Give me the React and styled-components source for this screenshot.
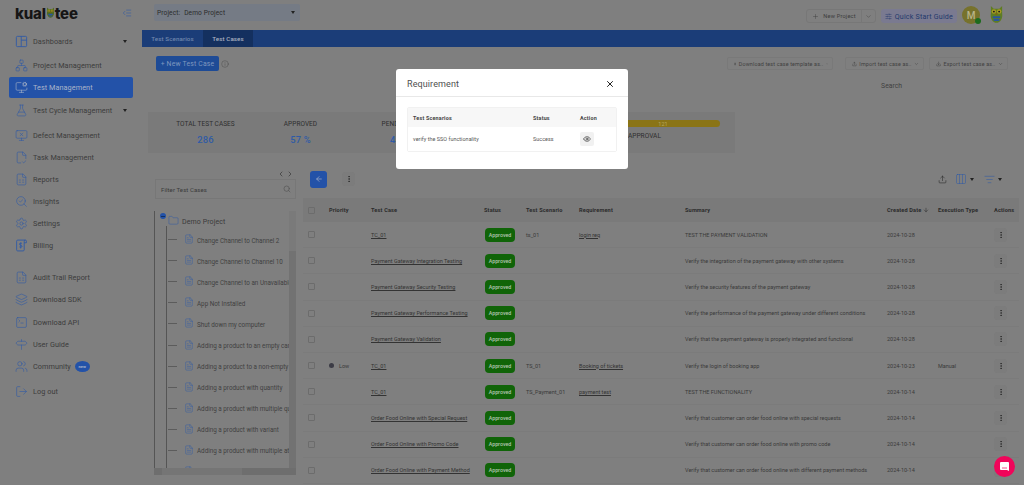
import React from 'react';
import styled, { createGlobalStyle } from 'styled-components';
import {
  Network, MonitorCog, FlaskConical, MonitorX, FileCheck2, FileSpreadsheet, SearchCheck,
  Settings, Layers, SquareTerminal, Signpost, Users, LogOut, ChevronDown, ChevronLeft,
  ChevronRight, Plus, Info, FileText, Upload, Download, Search, ArrowLeft, ArrowDown, EllipsisVertical,
  Columns3, ListFilter, Eye, X, Folder, SlidersHorizontal, IndentDecrease,
} from 'lucide-react';

const Global = createGlobalStyle`
  html, body { margin: 0; padding: 0; height: 100%; background: #7f7f7f; overflow: hidden; }
  * { box-sizing: border-box; }
  body { font-family: Roboto, "Liberation Sans", sans-serif; color: #333; }
`;

const Page = styled.div`
  display: flex;
  width: 1024px;
  height: 485px;
  overflow: hidden;
  background: #7f7f7f;
`;

/* ---- sidebar ---- */
const Sidebar = styled.aside`
  width: 142px;
  flex: none;
  display: flex;
  flex-direction: column;
  padding: 0 9px;
`;
const LogoRow = styled.div`
  height: 30px;
  display: flex;
  align-items: center;
  justify-content: space-between;
  padding: 0 1px 4px 6px;
  color: #2f5aa6;
`;
const Logo = styled.div`
  display: flex;
  align-items: center;
  font-family: Inter, "DejaVu Sans", sans-serif;
  font-weight: 800;
  font-size: 15px;
  letter-spacing: -0.2px;
  color: #161616;
`;
const NavItem = styled.div`
  height: ${p => (p.$active ? 21 : 22)}px;
  margin-top: ${p => p.$mt || 0}px;
  display: flex;
  align-items: center;
  gap: 5px;
  padding: 0 6px;
  border-radius: 2px;
  font-size: 7.3px;
  letter-spacing: 0.05px;
  white-space: nowrap;
  color: ${p => (p.$active ? '#aab4c8' : '#3c3c3c')};
  background: ${p => (p.$active ? '#2352a8' : 'transparent')};
  svg { flex: none; color: ${p => (p.$active ? '#aab4c8' : '#2f5aa6')}; }
`;
const Caret = styled.span`
  width: 0;
  height: 0;
  border-left: 2.5px solid transparent;
  border-right: 2.5px solid transparent;
  border-top: 3px solid ${p => p.$color || '#222'};
  margin-left: ${p => p.$ml || '0'};
`;
const NewPill = styled.span`
  width: 15px;
  height: 11px;
  margin-left: -1px;
  border-radius: 50%;
  background: #2352a8;
  color: #aab4c8;
  font-size: 4px;
  font-weight: 700;
  display: flex;
  align-items: center;
  justify-content: center;
`;

/* ---- top of main ---- */
const Main = styled.main`
  flex: 1;
  min-width: 0;
  display: flex;
  flex-direction: column;
`;
const Header = styled.header`
  height: 30px;
  display: flex;
  align-items: flex-start;
  justify-content: space-between;
  padding: 4px 20px 0 12px;
`;
const ProjectSelect = styled.div`
  width: 146px;
  height: 17px;
  display: flex;
  align-items: center;
  padding: 0 5px 0 3px;
  background: #757b85;
  border-radius: 2px;
  font-size: 6.6px;
  letter-spacing: 0.1px;
  color: #2b2b2b;
  b { font-weight: 400; margin-left: 4px; flex: 1; }
`;
const HeaderRight = styled.div`
  display: flex;
  align-items: center;
  gap: 5px;
`;
const SplitButton = styled.div`
  display: flex;
  height: 14px;
  margin-top: 4px;
  border: 1px solid #777;
  border-radius: 3px;
  font-size: 5.6px;
  letter-spacing: 0.2px;
  color: #3c3c3c;
  span {
    display: flex;
    align-items: center;
    gap: 4px;
    padding: 0 5px;
  }
  span + span { border-left: 1px solid #777; padding: 0 3px; }
`;
const GuideButton = styled.div`
  height: 14px;
  margin-top: 4px;
  padding: 0 4px;
  display: flex;
  align-items: center;
  gap: 3px;
  background: #7a7a90;
  border-radius: 3px;
  color: #22396c;
  font-size: 7.1px;
  letter-spacing: 0.2px;
`;
const Avatar = styled.div`
  position: relative;
  width: 18px;
  height: 18px;
  margin-top: 2px;
  border-radius: 50%;
  background: #77722c;
  color: #b9b48a;
  font-size: 10px;
  font-weight: 500;
  display: flex;
  align-items: center;
  justify-content: center;
  &::after {
    content: '';
    position: absolute;
    right: -1px;
    bottom: 0;
    width: 6px;
    height: 6px;
    border-radius: 50%;
    background: #1d6b1d;
  }
`;
const OwlSlot = styled.div`
  margin: 1px 0 0 4px;
  display: flex;
`;
const TabBar = styled.nav`
  height: 17px;
  flex: none;
  display: flex;
  background: #1b3d78;
`;
const Tab = styled.div`
  width: ${p => p.$w}px;
  height: 100%;
  display: flex;
  align-items: center;
  justify-content: center;
  background: ${p => (p.$active ? '#14305f' : 'transparent')};
  color: ${p => (p.$active ? '#a9b1c0' : '#6f86ad')};
  font-size: 6.2px;
  font-weight: 500;
  letter-spacing: 0.1px;
`;
const ActionArea = styled.section`
  height: 65px;
  flex: none;
  display: flex;
  justify-content: space-between;
  padding: 9px 16px 0 14px;
`;
const ActionLeft = styled.div`
  display: flex;
  align-items: flex-start;
  gap: 2px;
  color: #404040;
  svg { margin-top: 4px; }
`;
const PrimaryButton = styled.div`
  width: 63px;
  height: 15px;
  border-radius: 2px;
  background: #1e4b96;
  color: #7f97bf;
  display: flex;
  align-items: center;
  justify-content: center;
  font-size: 6.8px;
  letter-spacing: 0.2px;
`;
const ActionRight = styled.div`
  display: flex;
  flex-direction: column;
  align-items: flex-end;
`;
const ExportRow = styled.div`
  display: flex;
  gap: 5px;
`;
const GhostSelect = styled.div`
  width: ${p => p.$w}px;
  height: 13px;
  margin-top: 1px;
  margin-left: ${p => p.$ml || 0}px;
  padding: 0 4px 0 6px;
  display: flex;
  align-items: center;
  gap: 2.5px;
  border: 1px solid #797979;
  border-radius: 2px;
  font-size: 5.4px;
  letter-spacing: 0.15px;
  color: #3f3f3f;
  white-space: nowrap;
  span { flex: 1; }
`;
const SearchLabel = styled.div`
  margin: 12px 106px 0 0;
  font-size: 6.8px;
  color: #3f3f3f;
`;

/* ---- stats ---- */
const StatsBand = styled.section`
  height: 41px;
  flex: none;
  width: 587px;
  margin-left: 6px;
  background: #7a7a7a;
  display: flex;
  padding-top: 8px;
`;
const Stat = styled.div`
  width: 95px;
  display: flex;
  flex-direction: column;
  align-items: center;
  gap: 6px;
  margin-left: ${p => p.$ml || 0}px;
`;
const StatLabel = styled.div`
  font-size: 6.5px;
  letter-spacing: 0.05px;
  color: #2f2f2f;
`;
const StatValue = styled.div`
  font-size: 9.4px;
  font-weight: 500;
  letter-spacing: 0.2px;
  color: #2f5aa6;
`;
const Approval = styled.div`
  margin-left: 185px;
  width: 92px;
  font-size: 6.6px;
  color: #2f2f2f;
`;
const YellowBar = styled.div`
  height: 7px;
  margin-left: -22px;
  width: 114px;
  margin-bottom: 5px;
  border-radius: 4px;
  background: #8a7416;
  color: #b6a85e;
  font-size: 5.5px;
  display: flex;
  align-items: center;
  justify-content: center;
`;

/* ---- lower area ---- */
const Lower = styled.div`
  flex: 1;
  min-height: 0;
  display: flex;
  padding: 15px 5px 0 12px;
  gap: 7px;
`;
const TreeColumn = styled.div`
  width: 142px;
  flex: none;
  display: flex;
  flex-direction: column;
`;
const Pager = styled.div`
  height: 11px;
  display: flex;
  justify-content: flex-end;
  align-items: center;
  gap: 1px;
  padding-right: 2px;
  color: #333;
`;
const FilterBox = styled.div`
  height: 20px;
  margin-left: 1px;
  border: 1px solid #777;
  display: flex;
  align-items: center;
  justify-content: space-between;
  padding: 0 4px 0 5px;
  font-size: 6px;
  letter-spacing: 0.1px;
  color: #3a3a3a;
  svg { color: #555; }
`;
const TreePanel = styled.div`
  position: relative;
  height: 264px;
  margin-top: 12px;
  padding-right: 7px;
  overflow: hidden;
`;
const TreeRoot = styled.div`
  height: 19px;
  display: flex;
  align-items: center;
  padding-left: 5px;
  gap: 2px;
  font-size: 7px;
  letter-spacing: 0.1px;
  color: #3a3a3a;
  border-left: 1px solid #555;
  svg { color: #2f5aa6; }
  span { margin: 3px 0 0 1px; }
`;
const MinusDot = styled.i`
  width: 6px;
  height: 6px;
  border-radius: 50%;
  background: #2352a8;
  margin-top: -9px;
  display: flex;
  align-items: center;
  justify-content: center;
  &::after {
    content: '';
    width: 4px;
    height: 1px;
    background: #14305f;
  }
`;
const TreeList = styled.div`
  position: relative;
  margin-left: 0;
  border-left: 1px solid #555;
  padding-left: 12px;
  &::before {
    content: '';
    position: absolute;
    left: 11px;
    top: -4px;
    bottom: 0;
    width: 1px;
    background: #555;
  }
`;
const TreeRow = styled.div`
  height: 21.1px;
  display: flex;
  align-items: center;
  gap: 3px;
  font-size: 6.3px;
  color: #3f3f3f;
  white-space: nowrap;
  svg { flex: none; color: #2f5aa6; margin: -3px 0 0 0; }
  &::before {
    content: '';
    width: 9px;
    height: 1px;
    flex: none;
    margin: -2px 4px 0 1px;
    background: #5c5c5c;
  }
`;
const VScroll = styled.div`
  position: absolute;
  top: 0;
  right: 0;
  bottom: 0;
  width: 7px;
  background: #727272;
  &::after {
    content: '';
    display: block;
    height: 40px;
    background: #7a7a7a;
  }
`;
const HScroll = styled.div`
  position: absolute;
  left: 0;
  right: 0;
  bottom: 0;
  height: 7px;
  background: #6e6e6e;
  &::after {
    content: '';
    display: block;
    width: 80px;
    height: 100%;
    margin-left: 8px;
    background: #757575;
  }
`;

const TableColumn = styled.div`
  flex: 1;
  min-width: 0;
  display: flex;
  flex-direction: column;
`;
const TableTools = styled.div`
  height: 32px;
  flex: none;
  display: flex;
  align-items: center;
  padding: 0 17px 6px 7px;
  margin-top: -2px;
  color: #303030;
`;
const BackButton = styled.div`
  width: 17px;
  height: 17px;
  border-radius: 3px;
  background: #2352a8;
  color: #aab4c8;
  display: flex;
  align-items: center;
  justify-content: center;
`;
const KebabBox = styled.div`
  width: 13px;
  height: 14px;
  margin-left: ${p => p.$ml || 0}px;
  border-radius: 3px;
  background: #7c7c7c;
  color: #222;
  display: flex;
  align-items: center;
  justify-content: center;
`;
const ToolsRight = styled.div`
  margin-left: auto;
  display: flex;
  align-items: center;
  color: #2f5aa6;
`;
const UploadMark = styled.span`
  display: flex;
  color: #222;
  margin-right: 8px;
`;
const FilterMark = styled.span`
  display: flex;
  margin-left: 10px;
`;
const rowCols = '26px 42px 113px 42px 53px 106px 202px 51px 56px 25px';
const HeadRow = styled.div`
  height: 24px;
  flex: none;
  display: grid;
  grid-template-columns: ${rowCols};
  align-items: center;
  background: #7a7a7a;
  font-size: 5.6px;
  font-weight: 700;
  letter-spacing: 0.15px;
  color: #2b2b2b;
`;
const SortCell = styled.span`
  display: flex;
  align-items: center;
  gap: 2px;
`;
const Row = styled.div`
  height: 26.2px;
  flex: none;
  display: grid;
  grid-template-columns: ${rowCols};
  align-items: center;
  border-bottom: 1px solid #7b7b7b;
  font-size: 5.5px;
  color: #3a3a3a;
  white-space: nowrap;
`;
const CheckBox = styled.span`
  width: 7px;
  height: 7px;
  margin-left: 5px;
  border: 1px solid #6c6c6c;
  border-radius: 1px;
`;
const TextLink = styled.span`
  text-decoration: underline;
  color: #333;
`;
const Badge = styled.span`
  width: 30px;
  height: 14px;
  margin-left: 1px;
  border-radius: 4px;
  background: #106408;
  color: #b5c4b0;
  font-size: 5.3px;
  font-weight: 500;
  display: flex;
  align-items: center;
  justify-content: center;
`;
const PriorityCell = styled.span`
  display: flex;
  align-items: center;
  gap: 5px;
  &::before {
    content: '';
    width: 5px;
    height: 5px;
    border-radius: 50%;
    background: #3c3c46;
  }
`;

/* ---- modal ---- */
const Backdrop = styled.div`
  position: fixed;
  inset: 0;
  display: flex;
  justify-content: center;
  align-items: flex-start;
  padding-top: 69px;
`;
const Modal = styled.div`
  width: 232px;
  height: 100px;
  background: #fff;
  border-radius: 3px;
  color: #333;
`;
const ModalHeader = styled.div`
  height: 28px;
  display: flex;
  align-items: center;
  justify-content: space-between;
  padding: 2px 13px 0 11px;
  border-bottom: 1px solid #e8e8e8;
  font-size: 9px;
  letter-spacing: 0.1px;
  color: #4f4f4f;
`;
const ModalTable = styled.div`
  width: 210px;
  margin: 10px 0 0 11px;
  border: 1px solid #f1f1f1;
  border-radius: 2px;
`;
const ModalRow = styled.div`
  height: ${p => (p.$head ? 19 : 24)}px;
  display: grid;
  grid-template-columns: 120px 47px 1fr;
  align-items: center;
  padding-left: 5px;
  background: ${p => (p.$head ? '#f7f7f7' : '#fff')};
  font-size: 5.4px;
  font-weight: ${p => (p.$head ? 700 : 400)};
  letter-spacing: ${p => (p.$head ? 0.2 : 0.05)}px;
  color: ${p => (p.$head ? '#444' : '#555')};
`;
const EyeButton = styled.span`
  width: 14px;
  height: 14px;
  border-radius: 2px;
  background: #f1f1f1;
  color: #333;
  display: flex;
  align-items: center;
  justify-content: center;
`;
const ChatBubble = styled.div`
  position: fixed;
  right: 9px;
  bottom: 8px;
  width: 21px;
  height: 21px;
  border-radius: 50%;
  background: #f0055a;
  display: flex;
  align-items: center;
  justify-content: center;
`;

const Owl = ({ size = 16, muted }) => (
  <svg width={size} height={size * 1.25} viewBox="0 0 16 20">
    <path d="M2 1l3 3h6l3-3v8c1 5-2 10-6 10S1 14 2 9z" fill={muted ? '#4d6a1c' : '#5f7d22'} />
    <circle cx="5.2" cy="7" r="2.4" fill="#a89a22" />
    <circle cx="10.8" cy="7" r="2.4" fill="#a89a22" />
    <circle cx="5.2" cy="7" r="1" fill="#1a1a1a" />
    <circle cx="10.8" cy="7" r="1" fill="#1a1a1a" />
    <path d="M8 8l1.3 2.4H6.7z" fill="#8a5a12" />
    <path d="M4 12h8v2H4zM5 15h6v2H5z" fill="#2a55a0" />
  </svg>
);

const DashboardIcon = ({ size, strokeWidth }) => (
  <svg width={size} height={size} viewBox="0 0 24 24" fill="none" stroke="currentColor" strokeWidth={strokeWidth * 1.5}>
    <rect x="2.5" y="2.5" width="19" height="19" rx="2" />
    <path d="M11.5 2.5v19M11.5 9.5h10" />
  </svg>
);

const BillingIcon = ({ size, strokeWidth }) => (
  <svg width={size} height={size} viewBox="0 0 24 24" fill="none" stroke="currentColor" strokeWidth={strokeWidth * 1.5}>
    <path d="M17 7V4a2 2 0 0 1 4 0v3zM19 2H5a2 2 0 0 0-2 2v16a2 2 0 0 0 2 2h10a2 2 0 0 0 2-2V7" />
    <path d="M13 8.5c-1-1.2-5-1.2-5 1s5 1.8 5 4-4 2.2-5 1M10.500 6.500v11" />
  </svg>
);

const iconProps = { size: 13, strokeWidth: 1.1 };

const navTop = [
  { label: 'Dashboards', icon: DashboardIcon, caret: true },
  { label: 'Project Management', icon: Network, mt: 2 },
  { label: 'Test Management', icon: MonitorCog, active: true, mt: 1 },
  { label: 'Test Cycle Management', icon: FlaskConical, caret: true, mt: 1 },
  { label: 'Defect Management', icon: MonitorX, mt: 3 },
  { label: 'Task Management', icon: FileCheck2 },
  { label: 'Reports', icon: FileSpreadsheet },
  { label: 'Insights', icon: SearchCheck },
  { label: 'Settings', icon: Settings },
  { label: 'Billing', icon: BillingIcon },
  { label: 'Audit Trail Report', icon: FileSpreadsheet, mt: 10 },
  { label: 'Download SDK', icon: Layers },
  { label: 'Download API', icon: SquareTerminal, mt: 1 },
  { label: 'User Guide', icon: Signpost },
  { label: 'Community', icon: Users, pill: true },
  { label: 'Log out', icon: LogOut, mt: 3 },
];

const treeItems = [
  'Change Channel to Channel 2',
  'Change Channel to Channel 10',
  'Change Channel to an Unavailable Channel',
  'App Not Installed',
  'Shut down my computer',
  'Adding a product to an empty cart',
  'Adding a product to a non-empty cart',
  'Adding a product with quantity',
  'Adding a product with multiple quantities',
  'Adding a product with variant',
  'Adding a product with multiple attributes',
  '',
];

const rows = [
  { name: 'TC_01', scenario: 'ts_01', req: 'login req', summary: 'TEST THE PAYMENT VALIDATION', date: '2024-10-28' },
  { name: 'Payment Gateway Integration Testing', summary: 'Verify the integration of the payment gateway with other systems', date: '2024-10-28' },
  { name: 'Payment Gateway Security Testing', summary: 'Verify the security features of the payment gateway', date: '2024-10-28' },
  { name: 'Payment Gateway Performance Testing', summary: 'Verify the performance of the payment gateway under different conditions', date: '2024-10-28' },
  { name: 'Payment Gateway Validation', summary: 'Verify that the payment gateway is properly integrated and functional', date: '2024-10-28' },
  { priority: 'Low', name: 'TC_01', scenario: 'TS_01', req: 'Booking of tickets', summary: 'Verify the login of booking app', date: '2024-10-23', type: 'Manual' },
  { name: 'TC_01', scenario: 'TS_Payment_01', req: 'payment test', summary: 'TEST THE FUNCTIONALITY', date: '2024-10-14' },
  { name: 'Order Food Online with Special Request', summary: 'Verify that customer can order food online with special requests', date: '2024-10-14' },
  { name: 'Order Food Online with Promo Code', summary: 'Verify that customer can order food online with promo code', date: '2024-10-14' },
  { name: 'Order Food Online with Payment Method', summary: 'Verify that customer can order food online with different payment methods', date: '2024-10-14' },
];

export default function App() {
  return (
    <Page>
      <Global />
      <Sidebar>
        <LogoRow>
          <Logo>kual<Owl size={9} muted />tee</Logo>
          <IndentDecrease size={10} strokeWidth={1.4} />
        </LogoRow>
        {navTop.map(item => {
          const Icon = item.icon;
          return (
            <NavItem key={item.label} $active={item.active} $mt={item.mt}>
              <Icon {...iconProps} />
              {item.label}
              {item.caret && <Caret $ml="auto" />}
              {item.pill && <NewPill>new</NewPill>}
            </NavItem>
          );
        })}
      </Sidebar>

      <Main>
        <Header>
          <ProjectSelect>
            Project:<b>Demo Project</b>
            <Caret />
          </ProjectSelect>
          <HeaderRight>
            <SplitButton>
              <span><Plus size={7} strokeWidth={1.4} />New Project</span>
              <span><ChevronDown size={7} strokeWidth={1.4} /></span>
            </SplitButton>
            <GuideButton><SlidersHorizontal size={7} strokeWidth={1.6} />Quick Start Guide</GuideButton>
            <Avatar>M</Avatar>
            <OwlSlot><Owl size={15} /></OwlSlot>
          </HeaderRight>
        </Header>
        <TabBar>
          <Tab $w={61}>Test Scenarios</Tab>
          <Tab $w={50} $active>Test Cases</Tab>
        </TabBar>
        <ActionArea>
          <ActionLeft>
            <PrimaryButton>+ New Test Case</PrimaryButton>
            <Info size={8} strokeWidth={1.1} />
          </ActionLeft>
          <ActionRight>
            <ExportRow>
              <GhostSelect $w={106}><FileText size={6} /><span>Download test case template as..</span><ChevronDown size={6} /></GhostSelect>
              <GhostSelect $w={79} $ml={7}><Upload size={6} /><span>Import test case as..</span><ChevronDown size={6} /></GhostSelect>
              <GhostSelect $w={79}><Download size={6} /><span>Export test case as..</span><ChevronDown size={6} /></GhostSelect>
            </ExportRow>
            <SearchLabel>Search</SearchLabel>
          </ActionRight>
        </ActionArea>
        <StatsBand>
          <Stat $ml={10}><StatLabel>TOTAL TEST CASES</StatLabel><StatValue>286</StatValue></Stat>
          <Stat><StatLabel>APPROVED</StatLabel><StatValue>57 %</StatValue></Stat>
          <Stat><StatLabel>PENDING</StatLabel><StatValue>42</StatValue></Stat>
          <Approval>
            <YellowBar>121</YellowBar>
            APPROVAL
          </Approval>
        </StatsBand>
        <Lower>
          <TreeColumn>
            <Pager><ChevronLeft size={8} /><ChevronRight size={8} /></Pager>
            <FilterBox>Filter Test Cases<Search size={8} /></FilterBox>
            <TreePanel>
              <TreeRoot>
                <MinusDot />
                <Folder size={11} strokeWidth={1.1} />
                <span>Demo Project</span>
              </TreeRoot>
              <TreeList>
                {treeItems.map((name, i) => (
                  <TreeRow key={i}><FileText size={10} strokeWidth={1.1} />{name}</TreeRow>
                ))}
              </TreeList>
              <VScroll />
              <HScroll />
            </TreePanel>
          </TreeColumn>
          <TableColumn>
            <TableTools>
              <BackButton><ArrowLeft size={8} strokeWidth={2} /></BackButton>
              <KebabBox $ml={15}><EllipsisVertical size={8} /></KebabBox>
              <ToolsRight>
                <UploadMark><Upload size={9} strokeWidth={1.4} /></UploadMark>
                <Columns3 size={12} strokeWidth={1.1} />
                <Caret $ml="3px" />
                <FilterMark><ListFilter size={11} strokeWidth={1.2} /></FilterMark>
                <Caret $ml="3px" />
              </ToolsRight>
            </TableTools>
            <HeadRow>
              <CheckBox />
              <span>Priority</span>
              <span>Test Case</span>
              <span>Status</span>
              <span>Test Scenario</span>
              <span>Requirement</span>
              <span>Summary</span>
              <SortCell>Created Date <ArrowDown size={6} /></SortCell>
              <span>Execution Type</span>
              <span>Actions</span>
            </HeadRow>
            {rows.map((row, i) => (
              <Row key={i}>
                <CheckBox />
                {row.priority ? <PriorityCell>{row.priority}</PriorityCell> : <span />}
                <TextLink>{row.name}</TextLink>
                <Badge>Approved</Badge>
                <span>{row.scenario}</span>
                <TextLink>{row.req}</TextLink>
                <span>{row.summary}</span>
                <span>{row.date}</span>
                <span>{row.type}</span>
                <KebabBox><EllipsisVertical size={8} /></KebabBox>
              </Row>
            ))}
          </TableColumn>
        </Lower>
      </Main>

      <Backdrop>
        <Modal>
          <ModalHeader>
            Requirement
            <X size={10} strokeWidth={2.4} color="#222" />
          </ModalHeader>
          <ModalTable>
            <ModalRow $head>
              <span>Test Scenarios</span>
              <span>Status</span>
              <span>Action</span>
            </ModalRow>
            <ModalRow>
              <span>verify the SSO functionality</span>
              <span>Success</span>
              <EyeButton><Eye size={8} strokeWidth={2} /></EyeButton>
            </ModalRow>
          </ModalTable>
        </Modal>
      </Backdrop>
      <ChatBubble>
        <svg width="11" height="11" viewBox="0 0 11 11">
          <path d="M2 1h7a1 1 0 0 1 1 1v8L8 9H2a1 1 0 0 1-1-1V2a1 1 0 0 1 1-1z" fill="#fff" />
          <path d="M3 7h5" stroke="#f0055a" strokeWidth="0.7" />
        </svg>
      </ChatBubble>
    </Page>
  );
}
